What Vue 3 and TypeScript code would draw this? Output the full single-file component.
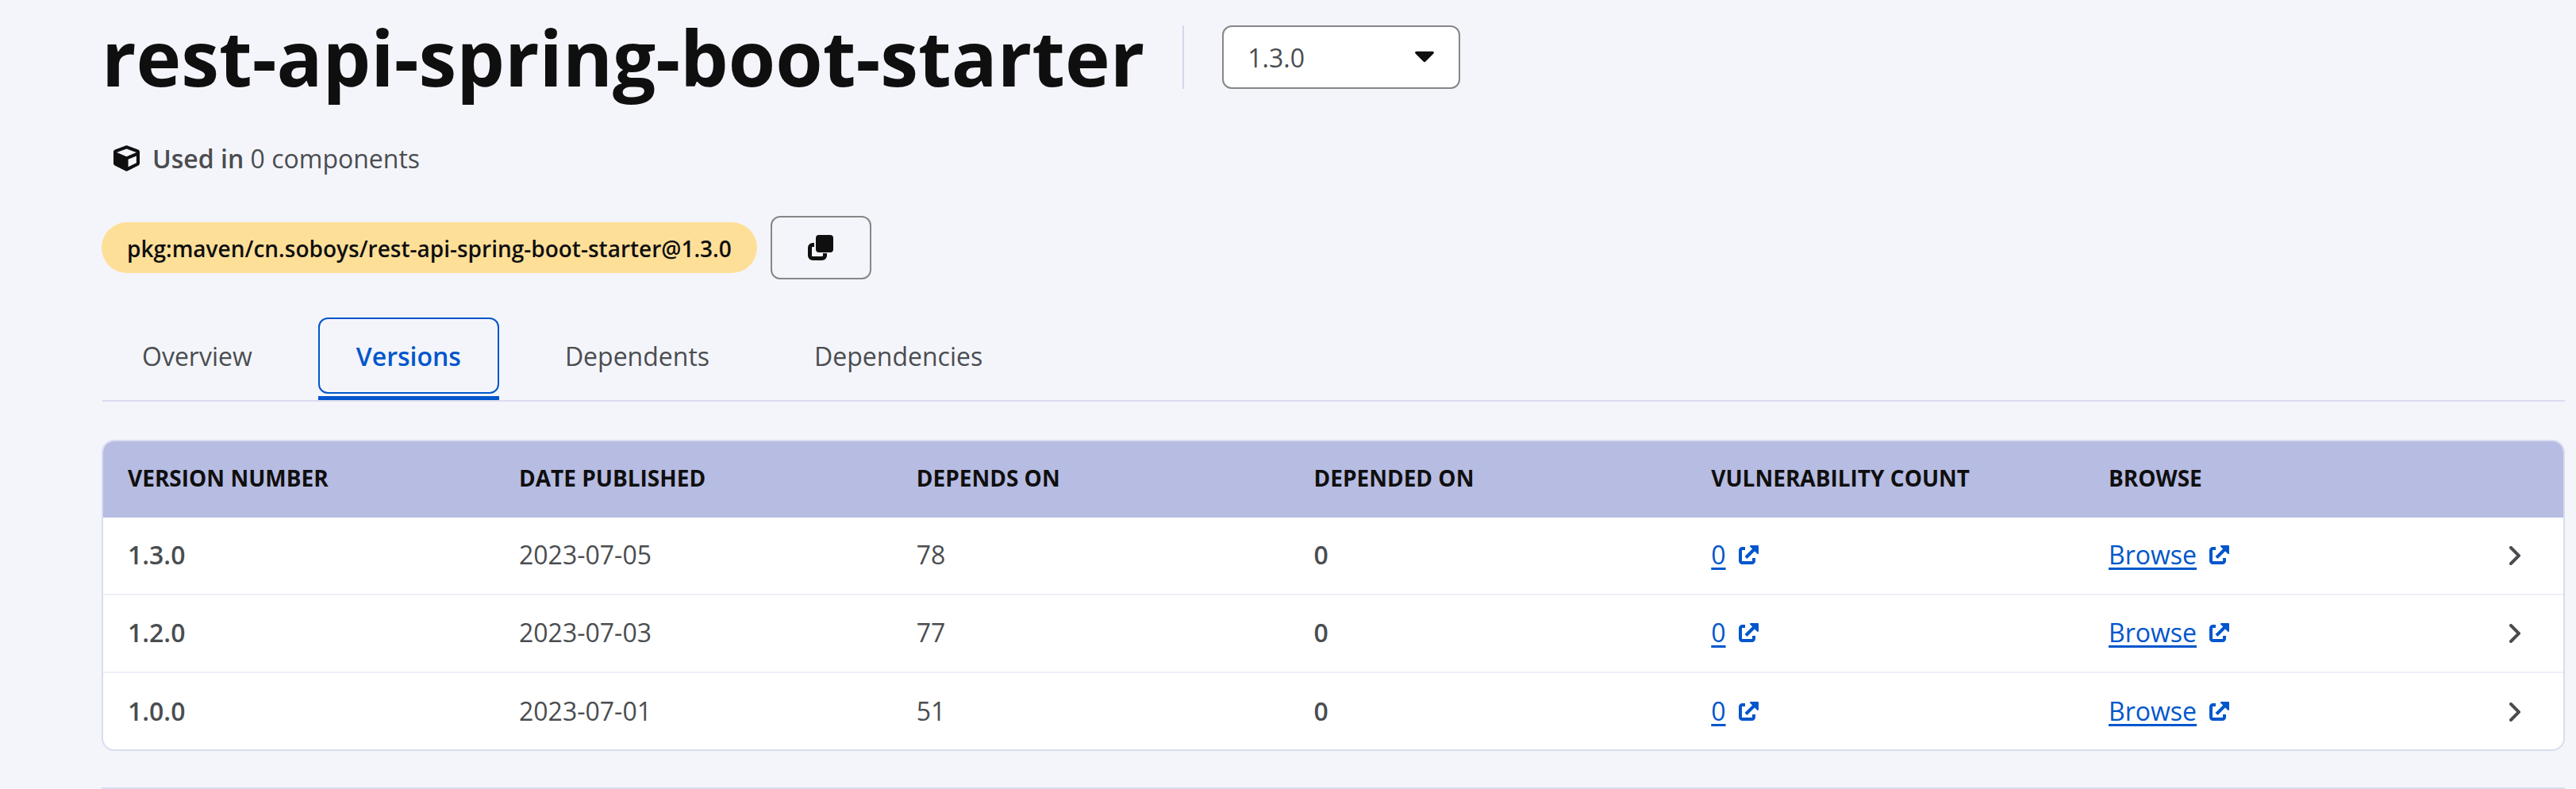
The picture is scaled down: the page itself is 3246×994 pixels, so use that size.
<template>
  <div class="page">
    <header class="title-row">
      <h1 class="title">rest-api-spring-boot-starter</h1>
      <span class="divider"></span>
      <button class="select" type="button">
        <span>1.3.0</span>
        <svg class="caret" viewBox="0 0 320 200">
          <path d="M31.300 10h257.300c17.800 0 26.700 21.500 14.100 34.100L174.100 172.800c-7.800 7.800-20.500 7.800-28.300 0L17.200 44.100C4.600 31.500 13.500 10 31.300 10z" />
        </svg>
      </button>
    </header>

    <div class="used-in">
      <svg class="cube" viewBox="0 0 512 512">
        <path d="M239.100 6.300l-208 78c-18.700 7-31.100 25-31.100 45v225.100c0 18.200 10.300 34.800 26.500 42.900l208 104c13.500 6.800 29.400 6.800 42.900 0l208-104c16.300-8.100 26.500-24.800 26.500-42.900V129.300c0-20-12.400-37.900-31.100-44.900l-208-78C262 2.200 250 2.200 239.100 6.300zM256 68.400l192 72v1.100l-192 78-192-78v-1.100l192-72zm32 356V275.500l160-65v133.900l-160 80z" />
      </svg>
      <span><b>Used in</b> 0 components</span>
    </div>

    <div class="purl-row">
      <span class="purl">pkg:maven/cn.soboys/rest-api-spring-boot-starter@1.3.0</span>
      <button class="copy" type="button">
        <svg viewBox="0 0 32 32" class="copy-icon">
          <path class="copy-back" d="M8 12.500H6A3.500 3.500 0 0 0 2.500 16v10A3.500 3.500 0 0 0 6 29.500h12a3.500 3.500 0 0 0 3.500-3.500v-3" />
          <rect x="10" y="0" width="22" height="22" rx="4" />
        </svg>
      </button>
    </div>

    <nav class="tabs">
      <a v-for="tab in tabs" :key="tab" class="tab" :class="{ active: tab === 'Versions' }">{{ tab }}</a>
    </nav>

    <section class="table">
      <div class="row head">
        <div v-for="col in columns" :key="col" class="cell">{{ col }}</div>
        <div class="cell"></div>
      </div>
      <div v-for="item in versions" :key="item.version" class="row">
        <div class="cell strong">{{ item.version }}</div>
        <div class="cell">{{ item.date }}</div>
        <div class="cell">{{ item.dependsOn }}</div>
        <div class="cell strong">0</div>
        <div class="cell">
          <a class="link">0</a>
          <svg class="ext" viewBox="0 0 25 24">
            <path class="ext-box" d="M8 4H4.500A2.500 2.500 0 0 0 2 6.500v13A2.500 2.500 0 0 0 4.500 22h12a2.500 2.500 0 0 0 2.500-2.500V16" />
            <path class="ext-box" d="M9 15.500 19 5.500" />
            <path d="M14 1a1 1 0 0 1 1-1h9a1 1 0 0 1 1 1v9a1 1 0 0 1-1.700.700l-9-9A1 1 0 0 1 14 1z" />
          </svg>
        </div>
        <div class="cell">
          <a class="link">Browse</a>
          <svg class="ext" viewBox="0 0 25 24">
            <path class="ext-box" d="M8 4H4.500A2.500 2.500 0 0 0 2 6.500v13A2.500 2.500 0 0 0 4.500 22h12a2.500 2.500 0 0 0 2.500-2.500V16" />
            <path class="ext-box" d="M9 15.500 19 5.500" />
            <path d="M14 1a1 1 0 0 1 1-1h9a1 1 0 0 1 1 1v9a1 1 0 0 1-1.700.700l-9-9A1 1 0 0 1 14 1z" />
          </svg>
        </div>
        <div class="cell chevron-cell">
          <svg class="chevron" viewBox="0 0 14 24">
            <path d="M2 2l10 10L2 22" />
          </svg>
        </div>
      </div>
    </section>

    <div class="bottom-line"></div>
  </div>
</template>

<script setup lang="ts">
interface VersionRow {
  version: string
  date: string
  dependsOn: number
}

const tabs: string[] = ['Overview', 'Versions', 'Dependents', 'Dependencies']
const columns: string[] = ['Version number', 'Date published', 'Depends on', 'Depended on', 'Vulnerability count', 'Browse']
const versions: VersionRow[] = [
  { version: '1.3.0', date: '2023-07-05', dependsOn: 78 },
  { version: '1.2.0', date: '2023-07-03', dependsOn: 77 },
  { version: '1.0.0', date: '2023-07-01', dependsOn: 51 }
]
</script>

<style>
html,
body {
  margin: 0;
  overflow: hidden;
  background: #f4f5fb;
}
</style>

<style scoped>
.page {
  width: 3246px;
  height: 994px;
  box-sizing: border-box;
  padding: 32px 14px 0 128px;
  background: #f4f5fb;
  color: #4a4d50;
  font-family: "Open Sans", "Noto Sans", sans-serif;
  font-size: 32px;
  overflow: hidden;
}

.title-row {
  display: flex;
  align-items: center;
  height: 80px;
}

.title {
  margin: 0 48px 0 0;
  color: #0f0f0f;
  font-size: 96px;
  font-weight: 700;
  line-height: 80px;
  white-space: nowrap;
}

.divider {
  width: 2px;
  height: 80px;
  background: #d6d7e8;
  margin-right: 48px;
}

.select {
  width: 300px;
  height: 80px;
  box-sizing: border-box;
  display: flex;
  align-items: center;
  justify-content: space-between;
  padding: 0 30px 0 30px;
  border: 2px solid #868789;
  border-radius: 12px;
  background: #fff;
  color: #4a4d50;
  font: inherit;
}

.caret {
  width: 26px;
  height: 16px;
  fill: #0f0f0f;
}

.used-in {
  display: flex;
  align-items: center;
  gap: 16px;
  height: 44px;
  margin-top: 65px;
  padding-left: 15px;
}

.used-in b {
  font-weight: 600;
}

.cube {
  width: 33px;
  height: 33px;
  fill: #0f0f0f;
}

.purl-row {
  display: flex;
  align-items: center;
  gap: 17px;
  height: 80px;
  margin-top: 51px;
}

.purl {
  height: 64px;
  padding: 0 32px;
  border-radius: 32px;
  background: #fedf98;
  color: #0f0f0f;
  font-size: 28px;
  font-weight: 600;
  line-height: 66px;
  white-space: nowrap;
}

.copy {
  width: 127px;
  height: 80px;
  display: flex;
  align-items: center;
  justify-content: center;
  padding: 0;
  border: 2px solid #868789;
  border-radius: 12px;
  background: transparent;
}

.copy-icon {
  width: 32px;
  height: 32px;
  fill: #0f0f0f;
}

.copy-back {
  fill: none;
  stroke: #0f0f0f;
  stroke-width: 5;
}

.tabs {
  display: flex;
  gap: 35px;
  height: 104px;
  margin-top: 48px;
  margin-left: 1px;
  padding-left: 2px;
  border-bottom: 2px solid #d9dcf0;
}

.tab {
  position: relative;
  height: 96px;
  box-sizing: border-box;
  padding: 0 46px;
  border: 2px solid transparent;
  border-radius: 12px;
  line-height: 94px;
}

.tab:last-child {
  margin-left: 1px;
}

.tab.active {
  border-color: #0056cc;
  color: #0056cc;
  font-weight: 600;
}

.tab.active::after {
  content: "";
  position: absolute;
  left: -2px;
  right: -2px;
  bottom: -10px;
  height: 5px;
  background: #0056cc;
}

.table {
  margin-top: 48px;
  box-sizing: border-box;
  height: 392px;
  border: 2px solid #d9dcf0;
  border-radius: 16px;
  background: #fff;
  overflow: hidden;
}

.row {
  display: grid;
  grid-template-columns: 493px repeat(5, 500.75px) 1fr;
  height: 98px;
  box-sizing: border-box;
  border-bottom: 2px solid #eeeff8;
}

.row:last-child {
  border-bottom: 0;
}

.head {
  height: 96px;
  border-bottom: 0;
  background: #b7bce2;
  color: #0f0f0f;
  font-size: 28px;
  font-weight: 700;
  text-transform: uppercase;
}

.cell {
  display: flex;
  align-items: center;
  gap: 16px;
  padding-left: 31px;
  padding-bottom: 3px;
  white-space: nowrap;
}

.head .cell {
  padding-bottom: 5px;
}

.strong {
  font-weight: 600;
}

.link {
  color: #0056cc;
  text-decoration: underline;
  text-decoration-thickness: 3px;
  text-underline-offset: 4px;
}

.ext {
  width: 25px;
  height: 24px;
  fill: #0056cc;
}

.ext-box {
  fill: none;
  stroke: #0056cc;
  stroke-width: 4;
}

.chevron-cell {
  padding-left: 35px;
  padding-bottom: 0;
}

.chevron {
  width: 14px;
  height: 24px;
  fill: none;
  stroke: #4a4d50;
  stroke-width: 4;
  stroke-linecap: round;
}

.bottom-line {
  height: 2px;
  margin-top: 46px;
  background: #d9dcf0;
}
</style>
